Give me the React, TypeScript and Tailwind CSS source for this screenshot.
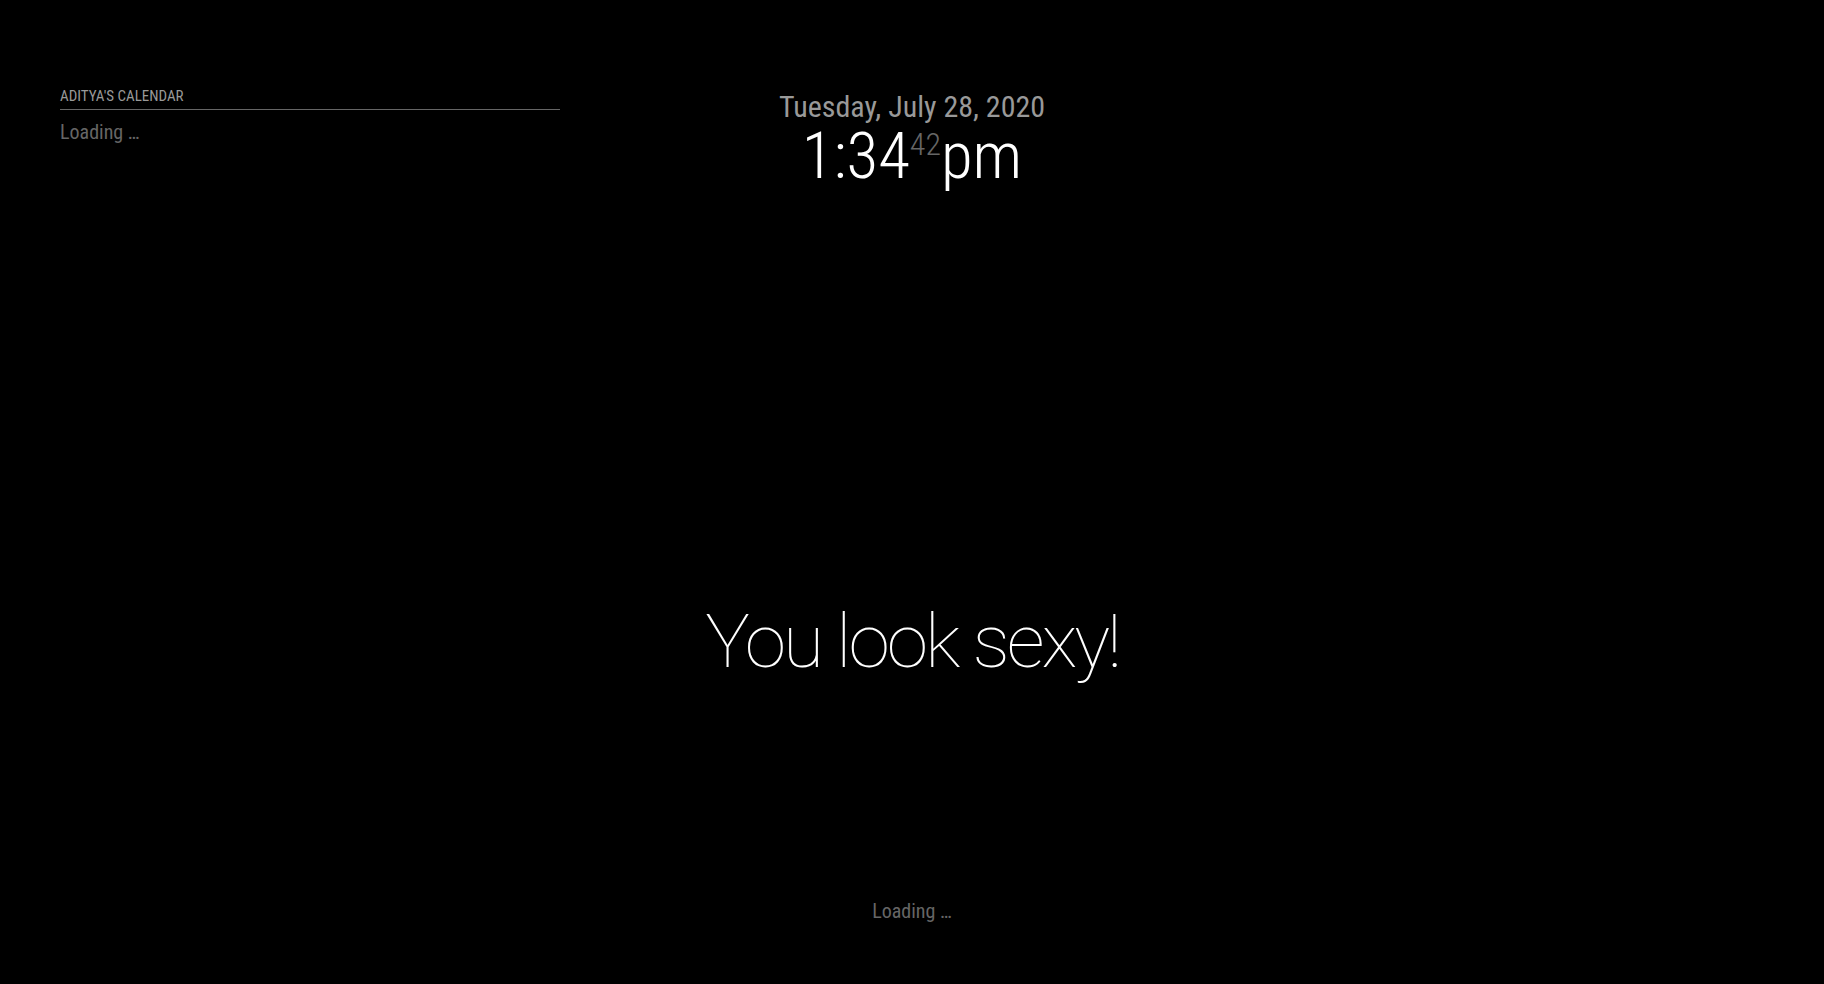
import React from 'react';

const condensed = { fontFamily: '"Roboto Condensed", Roboto, "Liberation Sans", sans-serif' };
const roboto = { fontFamily: 'Roboto, "Liberation Sans", sans-serif' };

export default function App() {
  return (
    <div
      className="w-[1824px] h-[984px] bg-black text-[#aaa] px-[60px] flex flex-col overflow-hidden"
      style={condensed}
    >
      {/* top regions */}
      <div className="grid grid-cols-3 pt-[89px]">
        <div className="w-[500px]">
          <header className="text-[15px] leading-[15px] uppercase text-[#999] border-b border-[#666] pb-[5px] mb-[10px]">
            Aditya's Calendar
          </header>
          <div className="text-[20px] leading-[25px] text-[#666]">Loading …</div>
        </div>

        <div className="flex flex-col items-center">
          <div className="text-[30px] leading-[35px] text-[#999]">Tuesday, July 28, 2020</div>
          <div className="text-[65px] leading-[65px] font-light text-white">
            1:34<span className="text-[32px] text-[#666] align-super leading-none">42</span>pm
          </div>
        </div>

        <div />
      </div>

      {/* middle: compliments */}
      <div className="flex-1 flex items-start justify-center pt-[415px]">
        <div className="text-[75px] leading-[75px] font-thin text-white tracking-[-3px]" style={roboto}>
          You look sexy!
        </div>
      </div>

      {/* bottom bar */}
      <div className="flex justify-center pb-[60px]">
        <div className="text-[20px] leading-[25px] text-[#666]">Loading …</div>
      </div>
    </div>
  );
}
